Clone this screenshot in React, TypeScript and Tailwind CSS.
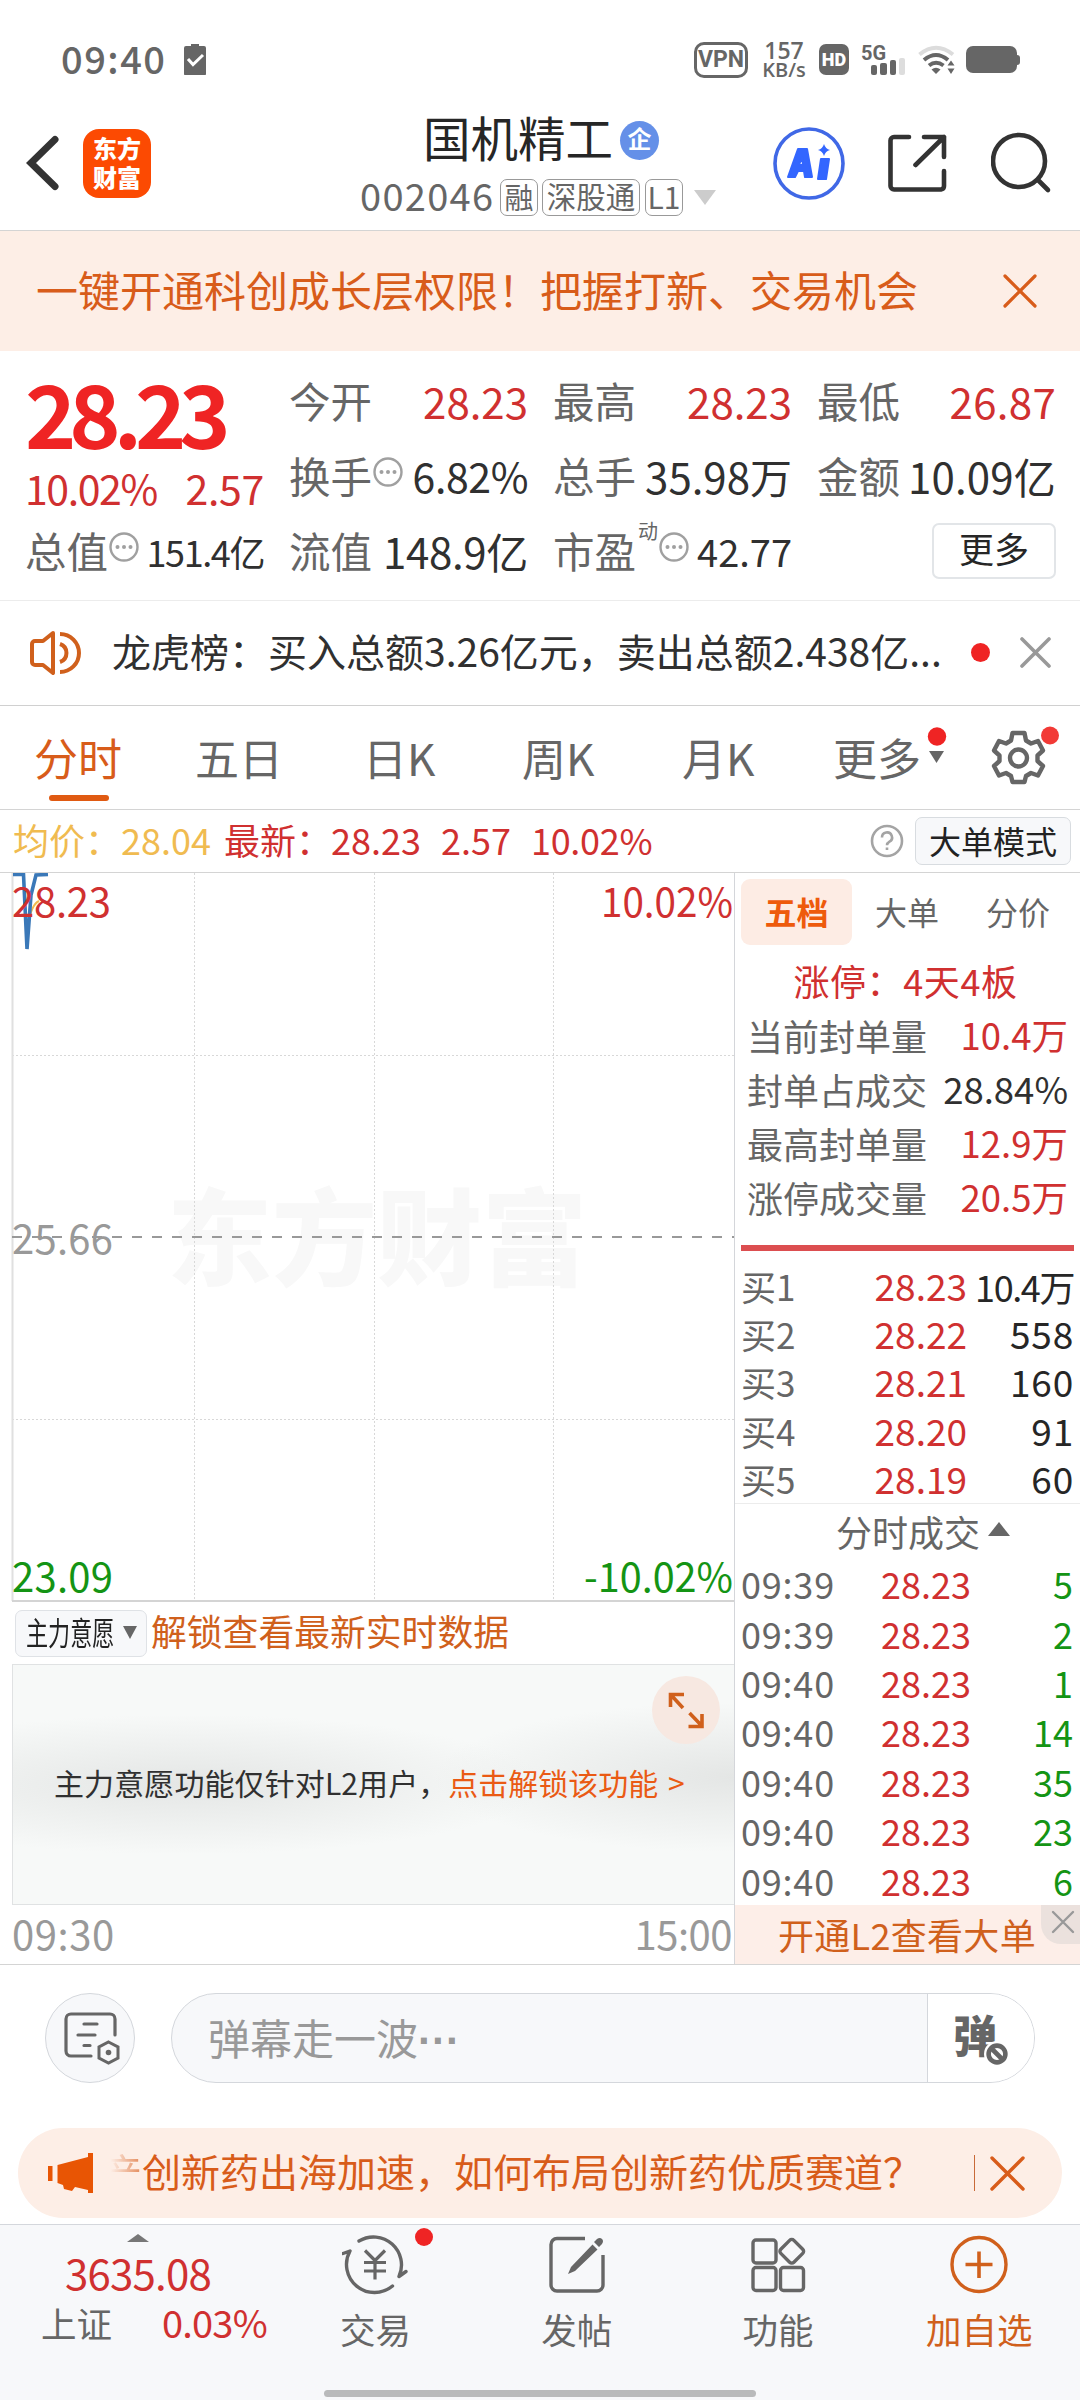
import React from "react";

const RED = "text-[#d03030]";
const DARK = "text-[#303030]";

const bids = [
  ["买1", "28.23", "10.4万"],
  ["买2", "28.22", "558"],
  ["买3", "28.21", "160"],
  ["买4", "28.20", "91"],
  ["买5", "28.19", "60"],
];

const trades = [
  ["09:39", "28.23", "5"],
  ["09:39", "28.23", "2"],
  ["09:40", "28.23", "1"],
  ["09:40", "28.23", "14"],
  ["09:40", "28.23", "35"],
  ["09:40", "28.23", "23"],
  ["09:40", "28.23", "6"],
];

const limitStats = [
  { label: "当前封单量", value: "10.4万", color: RED },
  { label: "封单占成交", value: "28.84%", color: DARK },
  { label: "最高封单量", value: "12.9万", color: RED },
  { label: "涨停成交量", value: "20.5万", color: RED },
];

const Cross = ({ size, width }: { size: number; width: number }) => (
  <svg width={size} height={size} viewBox={`0 0 ${size} ${size}`} stroke="currentColor" strokeWidth={width} strokeLinecap="round">
    <path d={`M2 2L${size - 2} ${size - 2}M${size - 2} 2L2 ${size - 2}`} />
  </svg>
);

const InfoDots = () => (
  <svg className="mb-2 ml-px shrink-0" width="30" height="30" viewBox="0 0 30 30" fill="none">
    <circle cx="15" cy="15" r="13.5" stroke="#a0a0a0" strokeWidth="2.4" />
    <circle cx="8.5" cy="15" r="2" fill="#a0a0a0" />
    <circle cx="15" cy="15" r="2" fill="#a0a0a0" />
    <circle cx="21.5" cy="15" r="2" fill="#a0a0a0" />
  </svg>
);

const StatusBar = () => (
  <div className="flex h-[86px] items-center pl-[61px] pr-[60px] pt-[33px] text-[#666]">
    <span className="-mt-1 w-[123px] text-[38px] font-medium leading-none tracking-[1.5px]">09:40</span>
    <svg width="22" height="31" viewBox="0 0 22 31">
      <path d="M2 2h5V0h8v2h5a2 2 0 0 1 2 2v25a1.500 1.500 0 0 1-2 2H2a1.500 1.500 0 0 1-2-2V4a2 2 0 0 1 2-2z" fill="#666" />
      <path d="M4 15l5 5.500L19 11" stroke="#fff" strokeWidth="3" fill="none" />
    </svg>
    <div className="ml-auto flex items-center">
      <span className="flex h-9 w-[54px] items-center justify-center rounded-[10px] border-[3.5px] border-[#666] font-['Roboto',sans-serif] text-[23px] font-bold leading-none">VPN</span>
      <span className="ml-[13px] flex w-[46px] flex-col items-center font-['Open_Sans',sans-serif] font-semibold leading-[19px]">
        <span className="text-[23px]">157</span>
        <span className="text-[20px]">KB/s</span>
      </span>
      <span className="ml-[12px] flex h-[31px] w-[30px] items-center justify-center rounded-[7px] bg-[#666] font-['Roboto',sans-serif] text-[18px] font-black leading-none text-white">HD</span>
      <svg className="ml-[12px]" width="46" height="31" viewBox="0 0 46 31" fill="#666">
        <text x="0" y="15.500" fontFamily="Roboto, sans-serif" fontSize="20" fontWeight="700">5G</text>
        <rect x="10" y="21" width="6" height="10" rx="2" />
        <rect x="19" y="19" width="7" height="12" rx="2" />
        <rect x="29" y="16" width="6" height="15" rx="2" />
        <rect x="38" y="14" width="6" height="17" rx="2" fill="#ddd" />
      </svg>
      <svg className="ml-[11px]" width="38" height="30" viewBox="0 0 38 30" fill="none" stroke="#666" strokeWidth="4">
        <path d="M1.500 9.500Q18 -4 35 9.500" stroke="#dcdcdc" />
        <path d="M6 15Q18 5 30 15" />
        <path d="M11 20.500Q18 15 25.500 20.500" />
        <path d="M13.500 24.500Q18 21 22.500 24.500L18 29z" fill="#666" stroke="none" />
        <path d="M29.500 20.500L33 15.500 36.500 20.500zM29.500 23.500L33 29 36.500 23.500z" fill="#666" stroke="none" />
      </svg>
      <span className="ml-[10px] h-[27px] w-[51px] rounded-[7px] bg-[#666]" />
      <span className="h-[10px] w-[3px] rounded-r bg-[#666]" />
    </div>
  </div>
);

const Header = () => (
  <header className="flex h-[145px] border-b border-[#d4d4d4]">
    <svg className="ml-[26px] mt-[49px]" width="34" height="56" viewBox="0 0 34 56" fill="none" stroke="#333" strokeWidth="7" strokeLinecap="round">
      <path d="M29 4.500L5 28 29 51.500" />
    </svg>
    <div className="ml-[23px] mt-[43px] flex h-[69px] w-[68px] flex-col items-center justify-center rounded-[16px] bg-[#fc4a02] pb-1 text-[24px] font-black leading-[29px] text-white">
      <span>东方</span>
      <span>财富</span>
    </div>
    <div className="ml-[209px] w-[370px]">
      <div className="mt-[27px] flex h-[54px] items-center pl-[63px]">
        <h1 className="-mt-1.5 text-[47.5px] leading-none text-[#262626]">国机精工</h1>
        <span className="ml-[7px] flex h-[39px] w-[39px] items-center justify-center rounded-full bg-[#6590e8] pb-1 text-[24px] font-bold leading-none text-white">企</span>
      </div>
      <div className="mt-[12px] flex h-[37px] items-center text-[#666]">
        <span className="-mt-1.5 w-[140px] text-[38px] leading-none tracking-[1.3px]">002046</span>
        <span className="flex h-[37px] w-[38px] items-center justify-center rounded-[7px] border border-[#999] pb-[3px] text-[29px] leading-none">融</span>
        <span className="ml-1 flex h-[37px] w-[98px] items-center justify-center rounded-[7px] border border-[#999] pb-[3px] text-[29.5px] leading-none">深股通</span>
        <span className="ml-[5px] flex h-[37px] w-[38px] items-center justify-center rounded-[7px] border border-[#999] pb-[3px] text-[30px] leading-none">L1</span>
        <svg className="ml-[11px]" width="22" height="15" viewBox="0 0 22 15"><path d="M0 0h22L11 15z" fill="#ccc" /></svg>
      </div>
    </div>
    <svg className="ml-[43px] mt-[41px]" width="72" height="73" viewBox="0 0 72 73">
      <ellipse cx="36" cy="36.500" rx="34" ry="34.500" fill="none" stroke="#4068e6" strokeWidth="3.600" />
      <g fill="#3366ff" stroke="#3366ff" strokeLinejoin="round" strokeWidth="2">
        <path fillRule="evenodd" d="M25 22h9l5 28h-7l-1-6h-6l-3 6h-7zM29 30l-3 8h4z" />
        <path d="M48 32h8l-3 20h-8z" />
      </g>
      <path d="M51 17q1.500 5 6 6-4.500 1-6 6-1.500-5-6-6 4.500-1 6-6z" fill="#3366ff" />
    </svg>
    <svg className="ml-[42px] mt-[47px]" width="60" height="60" viewBox="0 0 60 60" fill="none" stroke="#333" strokeWidth="4.600" strokeLinecap="round" strokeLinejoin="round">
      <path d="M22 4H7a3.500 3.500 0 0 0-3.500 3.500V53A3.500 3.500 0 0 0 7 56.500H54A3.500 3.500 0 0 0 57 53V38M37 4H57V24M57 4L28.500 32" />
    </svg>
    <svg className="ml-[44px] mt-[46px]" width="62" height="62" viewBox="0 0 62 62" fill="none" stroke="#333" strokeWidth="4.600" strokeLinecap="round">
      <circle cx="28" cy="29" r="26" />
      <path d="M47 48L57 58" />
    </svg>
  </header>
);

const Stat = ({ label, value, extra, className }: { label: string; value: string; extra?: React.ReactNode; className?: string }) => (
  <div className="flex h-[75px] items-center whitespace-nowrap">
    <span className="text-[41.5px] leading-none text-[#666]">{label}</span>
    {extra}
    <span className={`ml-auto leading-none ${className ?? "text-[42px] text-[#303030]"}`}>{value}</span>
  </div>
);

const Quote = () => (
  <section className="grid h-[250px] grid-cols-[239px_239px_239px_239px] content-start gap-x-[25px] border-b border-[#ececec] pl-[25px] pt-[12px]">
    <div className="row-span-2 h-[150px] text-[#d03030]">
      <div className="h-[91px] pt-[3px] text-[87px] font-bold leading-[91px] tracking-[-7px] text-[#ef2424]">28.23</div>
      <div className="mt-[13px] flex justify-between text-[41px] leading-none">
        <span className="tracking-[-1.4px]">10.02%</span>
        <span className="tracking-[-0.3px]">2.57</span>
      </div>
    </div>
    <Stat label="今开" value="28.23" className="text-[42px] text-[#d03030]" />
    <Stat label="最高" value="28.23" className="text-[42px] text-[#d03030]" />
    <Stat label="最低" value="26.87" className="text-[42px] tracking-[0.3px] text-[#d03030]" />
    <Stat label="换手" value="6.82%" extra={<InfoDots />} className="text-[41px] tracking-[-0.4px] text-[#303030]" />
    <Stat label="总手" value="35.98万" />
    <Stat label="金额" value="10.09亿" className="text-[42px] tracking-[0.2px] text-[#303030]" />
    <Stat label="总值" value="151.4亿" extra={<InfoDots />} className="text-[36px] tracking-[-1.4px] text-[#303030]" />
    <Stat label="流值" value="148.9亿" className="text-[42px] tracking-[-0.3px] text-[#303030]" />
    <Stat
      label="市盈"
      value="42.77"
      extra={<><span className="mb-10 ml-0.5 text-[20px] leading-none text-[#666]">动</span><InfoDots /></>}
      className="text-[38px] text-[#303030]"
    />
    <div className="flex items-center justify-end">
      <button className="h-[56px] w-[124px] rounded-[7px] border-2 border-[#e2e5e8] pb-1.5 text-[35px] leading-none text-[#262626]">更多</button>
    </div>
  </section>
);

const NewsRow = () => (
  <div className="flex h-[105px] items-center border-b border-[#d0d0d0] pl-[29px]">
    <svg width="52" height="46" viewBox="0 0 52 46" fill="none" stroke="#d0601c" strokeWidth="4" strokeLinejoin="round">
      <path d="M24 3L14 11H6a3 3 0 0 0-3 3V32a3 3 0 0 0 3 3H14L24 43z" />
      <path d="M31 4a19 19 0 0 1 0 38M31 14a9.500 9.500 0 0 1 0 18" />
    </svg>
    <span className="-mt-1.5 ml-[31px] w-[831px] whitespace-nowrap text-[39px] leading-none text-[#303030]">龙虎榜：买入总额3.26亿元，卖出总额2.438亿...</span>
    <span className="-mt-0.5 ml-[28px] h-[19px] w-[19px] rounded-full bg-[#ef2424]" />
    <span className="-mt-0.5 ml-[30px] text-[#999]"><Cross size={31} width={3.6} /></span>
  </div>
);

const Tabs = () => (
  <nav className="flex h-[104px] border-b border-[#d4d4d4] pt-[28px] text-[44px] leading-[46px] text-[#666]">
    <div className="ml-[34px] flex w-[161px] flex-col text-[#d85c1a]">
      <span className="h-[61px]">分时</span>
      <span className="ml-[15px] h-[6px] w-[60px] rounded-full bg-[#e05a12]" />
    </div>
    <span className="w-[168px]">五日</span>
    <span className="w-[159px]">日K</span>
    <span className="w-[160px]">周K</span>
    <span className="w-[151px]">月K</span>
    <span className="w-[94px]">更多</span>
    <svg className="-mt-[7px]" width="22" height="40" viewBox="0 0 22 40">
      <circle cx="10" cy="9.500" r="9.200" fill="#ef2424" />
      <path d="M2 24h15L9.500 36z" fill="#666" />
    </svg>
    <svg className="-mt-[10px] ml-[40px]" width="70" height="62" viewBox="0 0 70 62" fill="none">
      <g stroke="#666" strokeWidth="4.400" strokeLinejoin="round">
        <path d="M23.500 9H35.500L37 16.500L42 19.500L49 17L54 26.500L48.500 31.500V37L54 42L49 51.500L42 49L37 52L35.500 58H23.500L22 52L17 49L10 51.500L5 42L10.500 37V31.500L5 26.500L10 17L17 19.500L22 16.500z" />
        <circle cx="29.500" cy="34" r="8.500" />
      </g>
      <circle cx="61" cy="11.500" r="9" fill="#f23a36" />
    </svg>
  </nav>
);

const PriceInfo = () => (
  <div className="flex h-[63px] items-center whitespace-nowrap border-b border-[#d4d4d4] text-[36px] leading-none text-[#d03030]">
    <span className="-mt-1 ml-[13px] w-[211px] text-[#f0bb50]">均价：28.04</span>
    <span className="-mt-1 w-[107px]">最新：</span>
    <span className="-mt-1 w-[110px]">28.23</span>
    <span className="-mt-1 w-[90px]">2.57</span>
    <span className="-mt-1 tracking-[-0.3px]">10.02%</span>
    <svg className="ml-auto" width="34" height="34" viewBox="0 0 34 34" fill="none" stroke="#a4a4a4" strokeWidth="2.600">
      <circle cx="17" cy="17" r="15" />
      <path d="M12 13.500a5 5 0 1 1 7.500 4.200c-1.700 1-2.500 1.800-2.500 3.500M17 23.500v2.500" />
    </svg>
    <button className="ml-[11px] mr-[9px] h-[48px] w-[156px] rounded-[7px] border border-[#d8dce0] bg-[#f7f8fa] pb-0.5 text-[32px] leading-none text-[#222]">大单模式</button>
  </div>
);

const PriceChart = () => (
  <svg width="734" height="729" viewBox="0 0 734 729" fontFamily="'Noto Sans CJK SC', sans-serif" fontSize="40">
    <text x="167" y="404" fontSize="105" fontWeight="900" fill="#f8f8f8">东方财富</text>
    <path d="M194.500 0V727M374.500 0V727M553.500 0V727M12 182.500H734M12 546.500H734" stroke="#d8d8d8" strokeDasharray="2 2" />
    <path d="M12.500 0V728" stroke="#e0e0e0" strokeWidth="2" />
    <path d="M12 728H734" stroke="#d4d4d4" strokeWidth="2" />
    <path d="M12 364H734" stroke="#999" strokeWidth="2" strokeDasharray="10 10" />
    <path d="M28 50Q32 31 39 28" fill="none" stroke="#f0bb50" strokeWidth="2" />
    <path d="M13 1.500H23.500L27 76L31 22L36 2L48 1.500" fill="none" stroke="#3a78b8" strokeWidth="3.600" />
    <g fill="#d03030">
      <text x="12" y="44" textLength="99">28.23</text>
      <text x="733" y="44" textAnchor="end" textLength="132" lengthAdjust="spacingAndGlyphs">10.02%</text>
    </g>
    <text x="12" y="381" fill="#999" textLength="101">25.66</text>
    <g fill="#149414">
      <text x="12" y="719" textLength="101">23.09</text>
      <text x="733" y="719" textAnchor="end" textLength="149" lengthAdjust="spacingAndGlyphs">-10.02%</text>
    </g>
  </svg>
);

const MainForce = () => (
  <>
    <div className="flex h-[62px] items-center pl-[15px]">
      <div className="flex h-[47px] w-[132px] items-center rounded-[7px] border border-[#dfe2e6] bg-[#f7f8fa] pl-[10px]">
        <span className="-mt-1 w-[97px] origin-left scale-x-[.69] whitespace-nowrap text-[32px] leading-none text-[#222]">主力意愿</span>
        <svg width="14" height="14" viewBox="0 0 14 14"><path d="M0 0h14L7 13z" fill="#666" /></svg>
      </div>
      <span className="-mt-1 ml-[4px] text-[35.8px] leading-none text-[#d0601c]">解锁查看最新实时数据</span>
    </div>
    <div className="relative ml-[12px] h-[241px] border border-r-0 border-[#e0e2e3] bg-[#f7f9f8] bg-[radial-gradient(ellipse_360px_70px_at_24%_50%,#e4e6e5,transparent),radial-gradient(ellipse_300px_75px_at_100%_47%,#e4e6e5,transparent)] pt-[102px]">
      <div className="flex whitespace-nowrap pl-[41px] text-[30px] leading-none text-[#303030]">
        <span className="tracking-[0.1px]">主力意愿功能仅针对L2用户，</span>
        <span className="text-[#ea5a14]">点击解锁该功能 <span className="ml-[3px]">&gt;</span></span>
      </div>
      <svg className="absolute right-[13px] top-[10px]" width="70" height="70" viewBox="0 0 70 70">
        <circle cx="35" cy="35" r="34" fill="#f7e8e1" />
        <path d="M33 19.500H19.500V32M20 20L32 33M37.500 51.500H51V39M50 50L38.500 38" fill="none" stroke="#d0601c" strokeWidth="3.600" />
      </svg>
    </div>
    <div className="flex h-[59px] justify-between pl-[12px] pr-[2px] pt-[8px] text-[40px] leading-none text-[#999]">
      <span className="tracking-[0.6px]">09:30</span>
      <span className="tracking-[-0.5px]">15:00</span>
    </div>
  </>
);

const OrderBook = () => (
  <aside className="flex w-[346px] flex-col border-l border-[#d4d6da]">
    <div className="flex pl-[6px] pt-[6px] text-[32px] leading-none text-[#666]">
      <span className="flex h-[66px] w-[111px] items-center justify-center rounded-[9px] bg-[#fdece4] pb-0.5 font-bold text-[#ee5a0c]">五档</span>
      <span className="flex w-[110px] items-center justify-center pb-0.5">大单</span>
      <span className="flex w-[112px] items-center justify-center pb-0.5">分价</span>
    </div>
    <div className="mt-[17px] h-[46px] pr-1 text-center text-[36px] leading-none tracking-[0.6px] text-[#d03030]">涨停：4天4板</div>
    {limitStats.map((s) => (
      <div key={s.label} className="flex h-[54px] items-center justify-between pl-[12px] pr-[12px] leading-none">
        <span className="text-[36px] text-[#666]">{s.label}</span>
        <span className={`text-[36.5px] ${s.color}`}>{s.value}</span>
      </div>
    ))}
    <div className="ml-[6px] mr-[6px] mt-[21px] h-[6px] bg-[#dc4e50]" />
    <div className="h-[253px] border-b border-[#ececec] pt-[10px]">
      {bids.map(([name, price, amount]) => (
        <div key={name} className="flex h-[48.200px] items-center whitespace-nowrap pl-[6px] pr-[6px] pt-px leading-none">
          <span className="w-[90px] text-[35px] text-[#666]">{name}</span>
          <span className="w-[136px] text-right text-[37px] text-[#d03030]">{price}</span>
          <span className={`ml-auto text-[#262626] ${amount.endsWith("万") ? "text-[36px] tracking-[-1.4px]" : "text-[37px] tracking-[0.8px]"}`}>{amount}</span>
        </div>
      ))}
    </div>
    <div className="flex h-[54px] items-center pl-[101px] text-[36px] leading-none text-[#666]">
      <span>分时成交</span>
      <svg className="-mt-1 ml-[8px]" width="22" height="14" viewBox="0 0 22 14"><path d="M0 14L11 0 22 14z" fill="#666" /></svg>
    </div>
    <div className="h-[347px]">
      {trades.map(([time, price, vol], i) => (
        <div key={i} className="flex h-[49.400px] items-center pl-[6px] pr-[7px] pt-px leading-none">
          <span className="w-[110px] text-[36px] tracking-[0.8px] text-[#666]">{time}</span>
          <span className="w-[120px] text-right text-[36px] text-[#d03030]">{price}</span>
          <span className="ml-auto text-[36px] text-[#149414]">{vol}</span>
        </div>
      ))}
    </div>
    <div className="flex flex-1 items-start justify-between bg-[#fdeee8] pl-[43px] text-[#d0601c]">
      <span className="pt-[11px] text-[36px] leading-none tracking-[0.3px]">开通L2查看大单</span>
      <span className="flex h-[39px] w-[39px] items-center justify-center rounded-bl-[20px] bg-[#ebe1dd] pb-1.5 pl-1 text-[#999]"><Cross size={24} width={2.4} /></span>
    </div>
  </aside>
);

const Danmaku = () => (
  <div className="flex h-[163px] pl-[45px] pt-[28px]">
    <div className="flex h-[90px] w-[90px] items-center justify-center rounded-full border border-[#d4d7dc] bg-[#f7f8fa]">
      <svg className="ml-[3px]" width="56" height="54" viewBox="0 0 56 54" fill="none" stroke="#666" strokeWidth="3.200" strokeLinecap="round">
        <path d="M51 24V8a5 5 0 0 0-5-5H7a5 5 0 0 0-5 5V40a5 5 0 0 0 5 5H27M20 13H33M14 24H31M20 34.500H26" />
        <path d="M44.500 31L54 36V47L44.500 52L35 47V36z" strokeWidth="3" />
        <circle cx="44.500" cy="41.500" r="2.800" fill="#666" stroke="none" />
      </svg>
    </div>
    <div className="ml-[36px] flex h-[90px] w-[864px] overflow-hidden rounded-full border border-[#d4d7dc] bg-[#f7f8fa]">
      <span className="flex-1 pl-[36px] pt-[22px] text-[42px] leading-none text-[#999]">
        弹幕走一波<span className="font-['Liberation_Sans',sans-serif] font-bold">···</span>
      </span>
      <div className="relative w-[107px] border-l border-[#d4d7dc] bg-white">
        <span className="absolute left-[25px] top-[18px] text-[44px] font-black leading-none text-[#666]">弹</span>
        <svg className="absolute left-[56px] top-[47px]" width="26" height="26" viewBox="0 0 26 26" fill="none" stroke="#666" strokeWidth="4.600">
          <circle cx="13" cy="13" r="11" fill="#fff" stroke="#fff" strokeWidth="4" />
          <circle cx="13" cy="13" r="8.400" />
          <path d="M7.500 7.500L18.500 18.500" />
        </svg>
      </div>
    </div>
  </div>
);

const Notice = () => (
  <div className="mx-[18px] flex h-[90px] items-center rounded-full bg-[#fdeee6] pl-[30px] text-[#d85c1a]">
    <svg width="46" height="40" viewBox="0 0 46 40" fill="#e85504">
      <path d="M0 13h4.500V28H0zM9.500 12L40 4V0h5V40h-5V37L27 34l-3 4-8-2-1-4-5.500-2z" />
    </svg>
    <span className="-mt-1.5 ml-[9px] flex w-[871px] whitespace-nowrap text-[39px] leading-none">
      <span className="bg-gradient-to-r from-transparent from-20% to-[#d85c1a]/70 bg-clip-text text-transparent">产</span>
      创新药出海加速，如何布局创新药优质赛道？
    </span>
    <span className="h-9 w-px bg-[#c86a38]" />
    <span className="ml-[15px]"><Cross size={35} width={3.4} /></span>
  </div>
);

const NavItem = ({ label, active, children }: { label: string; active?: boolean; children: React.ReactNode }) => (
  <div className={`flex w-[201.300px] flex-col items-center pt-[7px] text-[35.500px] leading-none ${active ? "text-[#d0601c]" : "text-[#666]"}`}>
    <svg width="66" height="66" viewBox="0 0 66 66" fill="none" stroke="currentColor" strokeWidth="3.400" strokeLinecap="round" strokeLinejoin="round">
      {children}
    </svg>
    <span className="mt-[13px]">{label}</span>
  </div>
);

const BottomNav = () => (
  <footer className="mt-[6px] h-[176px] border-t border-[#d4d7dc] bg-[#f7f8fa]">
    <div className="flex h-[165px]">
      <div className="w-[275px] pt-[9px]">
        <svg className="ml-[127px]" width="22" height="8" viewBox="0 0 22 8"><path d="M0 8L11 0 22 8z" fill="#777" /></svg>
        <div className="ml-[65px] mt-[9px] text-[42px] leading-none tracking-[-0.8px] text-[#d03030]">3635.08</div>
        <div className="ml-[41px] mt-[12px] flex text-[35.5px] leading-none">
          <span className="w-[121px] text-[#666]">上证</span>
          <span className="-mt-0.5 text-[38px] tracking-[-0.8px] text-[#d03030]">0.03%</span>
        </div>
      </div>
      <div className="relative flex">
        <NavItem label="交易">
          <path d="M17 9.500A28 28 0 0 1 57 45L64 40M50.500 54.500A28 28 0 0 1 8 19.500L1 22" transform="translate(0 -.5)" />
          <path d="M23 18.500L33 28.500 43 18.500M22 30.500H44M22 39H44M33 28.500V47.500" strokeWidth="3.200" strokeLinecap="butt" />
        </NavItem>
        <span className="absolute left-[140px] top-[3px] h-[18px] w-[18px] rounded-full bg-[#ef2424]" />
        <NavItem label="发帖">
          <path d="M41 6.500H13a6 6 0 0 0-6 6V53a6 6 0 0 0 6 6H53a6 6 0 0 0 6-6V23" strokeLinecap="butt" />
          <path d="M50 10l3-3q3-2 5 0t0 5l-3 3zM48.500 12.500l5 5L31 39l-7 3 3-7z" fill="currentColor" stroke="none" />
        </NavItem>
        <NavItem label="功能">
          <rect x="8" y="8" width="23" height="23" rx="3" />
          <rect x="8" y="35.500" width="23" height="23" rx="3" />
          <rect x="35.500" y="35.500" width="23" height="23" rx="3" />
          <rect x="37.500" y="10" width="18.500" height="18.500" rx="3" transform="rotate(45 46.700 19.300)" />
        </NavItem>
        <NavItem label="加自选" active>
          <circle cx="33" cy="32.500" r="27" />
          <path d="M33 19.500V46M19.500 32.500H46.500" strokeLinecap="butt" strokeWidth="3.600" />
        </NavItem>
      </div>
    </div>
    <div className="mx-auto h-[7px] w-[432px] rounded-full bg-[#b9babb]" />
  </footer>
);

const App = () => {
  return (
    <div className="h-[2400px] w-[1080px] overflow-hidden bg-white font-['Noto_Sans_CJK_SC',sans-serif]">
      <StatusBar />
      <Header />
      {/* Promo banner */}
      <div className="flex h-[120px] items-center bg-[#fdeee6] pl-[36px] text-[#d85c1a]">
        <span className="-mt-1 w-[967px] text-[42px] leading-none">一键开通科创成长层权限！把握打新、交易机会</span>
        <Cross size={34} width={3.2} />
      </div>
      <Quote />
      <NewsRow />
      <Tabs />
      <PriceInfo />
      {/* Chart and order book */}
      <div className="flex h-[1092px] border-b border-[#d4d4d4]">
        <div className="w-[734px]">
          <div className="h-[729px]"><PriceChart /></div>
          <MainForce />
        </div>
        <OrderBook />
      </div>
      <Danmaku />
      <Notice />
      <BottomNav />
    </div>
  );
};

export default App;
